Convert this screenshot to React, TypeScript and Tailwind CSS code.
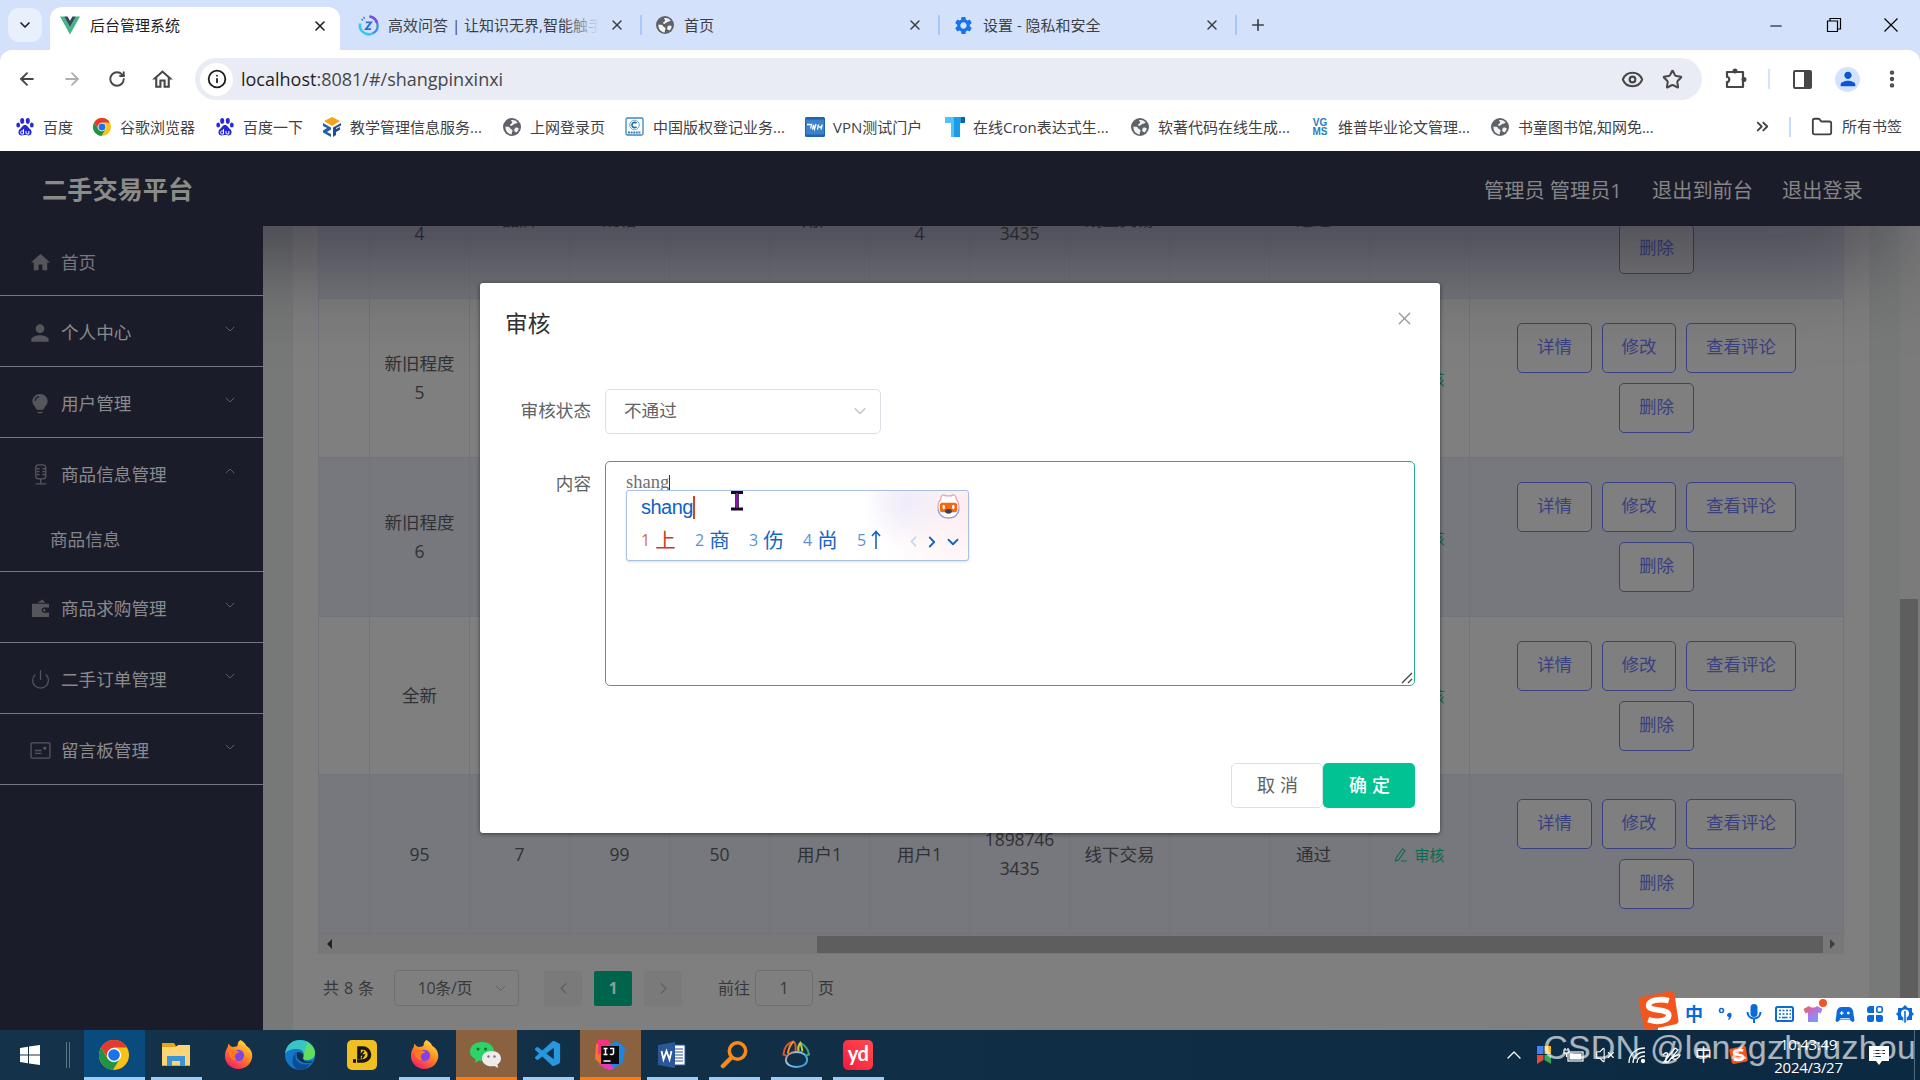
import React from 'react';
import {
  ArrowLeft, ArrowRight, RotateCw, Eye, Star, EllipsisVertical, X, Plus, ChevronDown,
  ChevronUp, ChevronLeft, ChevronRight, ChevronsRight, Folder, Info, Minus, Power, VolumeX,
} from 'lucide-react';
import { MdPerson, MdSettings, MdHome, MdOutlineHome } from 'react-icons/md';
import { VscVscode } from 'react-icons/vsc';

const ui = "font-['Open_Sans','Noto_Sans_CJK_SC',sans-serif]";

function VueLogo() {
  return (
    <svg viewBox="0 0 20 18" className="h-[19px] w-5 shrink-0">
      <path d="M0 0h4l6 10.400L16 0h4L10 18z" fill="#41b883" />
      <path d="M4 0h3.600L10 4.200 12.400 0H16l-6 10.400z" fill="#35495e" />
    </svg>
  );
}

function ZLogo() {
  return (
    <svg viewBox="0 0 20 20" className="size-[21px] shrink-0" fill="none">
      <path d="M11 1.500a8.500 8.500 0 0 1 3 16" stroke="#3d8fe8" strokeWidth="2.200" />
      <path d="M11 1.500a8.500 8.500 0 0 1 7 6" stroke="#7a4fd8" strokeWidth="2.400" />
      <path d="M2 8a8.500 8.500 0 0 0 12 9.500" stroke="#35c8ee" strokeWidth="2.400" />
      <path d="M3.500 5l3-3" stroke="#4a86e8" strokeWidth="2" strokeDasharray="1.500 1" />
      <path d="M7.500 7h5l-5 6.500h5" stroke="#2f6fe4" strokeWidth="1.800" />
    </svg>
  );
}

function Globe() {
  return (
    <svg viewBox="0 0 20 20" className="size-5 shrink-0">
      <circle cx="10" cy="10" r="9" fill="#5f6368" />
      <path d="M3.500 9.500c2.500.2 4 .2 4.500 1.500.5 1.500 2 1 2.500 2.200.3 1-.8 1.800-.8 4.300C5.500 17 3 13.500 3.500 9.500zM9 3.200c3-.7 5.500.6 6.800 2.800-1.500 0-2 .8-3.300.8-.8 1.200-2 .9-2.600 2-1 .4-2 0-1.700-1.200.4-1.200 1.700-.6 2-1.800.1-1-.9-1.400-1.200-2.600zM13 11c1.200-.6 2.600-.5 3.800.4-.4 1.700-1.200 3-2.400 4-1-.8-2-.4-2.200-2 0-1 .2-1.800.8-2.400z" fill="#f1f3f6" />
    </svg>
  );
}

function Baidu() {
  return (
    <svg viewBox="0 0 20 20" className="size-5 shrink-0" fill="#2529d8">
      <ellipse cx="7.200" cy="3.900" rx="2" ry="2.800" />
      <ellipse cx="12.800" cy="3.900" rx="2" ry="2.800" />
      <ellipse cx="3.200" cy="8" rx="1.900" ry="2.500" />
      <ellipse cx="16.800" cy="8" rx="1.900" ry="2.500" />
      <path d="M10 8c2.500 0 3 2.500 5 4 2.500 2 2 6.500-1.500 6.500-1.500 0-2-.4-3.500-.4s-2 .4-3.500.4C3 18.500 2.500 14 5 12c2-1.500 2.500-4 5-4z" />
      <path d="M8.500 12v5H6.800c-1.800 0-1.800-3 0-3h1.500M11 14v2c0 .8.3 1 1 1h1.800v-3" stroke="#fff" strokeWidth="1" fill="none" />
    </svg>
  );
}

function Chrome({ className }: { className: string }) {
  return (
    <svg viewBox="0 0 30 30" className={className}>
      <circle cx="15" cy="15" r="15" fill="#fbc116" />
      <path d="M2 7.500A15 15 0 0 0 14 30L21 18.500 8.500 18.500z" fill="#229342" />
      <path d="M2 7.500A15 15 0 0 1 28 7.500H15L9 18.500z" fill="#e33b2e" />
      <circle cx="15" cy="15" r="7.200" fill="#fff" />
      <circle cx="15" cy="15" r="5.800" fill="#1a73e8" />
    </svg>
  );
}

function JxLogo() {
  return (
    <svg viewBox="0 0 20 20" className="size-5 shrink-0">
      <path d="M10 0l8 4-8 5-8-5z" fill="#f6a21b" />
      <path d="M1 6l8 4.500v2L5 15l4 2v3l-8-4.500v-2L5 11 1 9z" fill="#2462a8" />
      <path d="M19 6l-8 4.500V20l3-2v-3l4-2.200V10l-4 2v-1l5-2.500z" fill="#1f4f90" />
    </svg>
  );
}

function CLogo() {
  return (
    <svg viewBox="0 0 20 20" className="size-5 shrink-0" fill="none">
      <rect x="1" y="1" width="17" height="17" rx="1.500" stroke="#3b86bd" strokeWidth="1.300" />
      <circle cx="9.500" cy="8" r="4.800" stroke="#6aa6d2" strokeWidth="1" />
      <path d="M11.500 6.300a2.600 2.600 0 1 0 0 3.400" stroke="#1d6dab" strokeWidth="1.600" />
      <path d="M3 15.500h13" stroke="#3b86bd" strokeWidth="2" strokeDasharray="2 .6" />
    </svg>
  );
}

function VpnLogo() {
  return (
    <svg viewBox="0 0 20 20" className="size-5 shrink-0">
      <rect width="20" height="20" rx="1.500" fill="#1e63b4" />
      <rect x="1" y="2.500" width="18" height="15" fill="#3c82cb" />
      <path d="M2 7.500h4.500l-.8 4M7.500 12.500l1-4.500 1 4 1.500-5M12.500 12.500l1-5M14 10h2.500M16 12.500l1.200-5" stroke="#fff" strokeWidth="1.300" fill="none" />
    </svg>
  );
}

function TLogo() {
  return (
    <svg viewBox="0 0 20 20" className="size-5 shrink-0">
      <path d="M0 0h20v6h-5v14H6V6H0z" fill="#1c9be6" />
      <path d="M0 0h9v20H6V6H0z" fill="#4fc3f7" />
      <path d="M16 0h4v6h-4z" fill="#0b63a8" />
    </svg>
  );
}

function Vgms() {
  return (
    <span className="flex w-5 shrink-0 flex-col items-center font-['Liberation_Sans',sans-serif] text-[10px] leading-[9px] font-bold text-[#2b7cc0]">
      <span>VG</span>
      <span>MS</span>
    </span>
  );
}

const tabs = [
  { icon: <ZLogo />, title: '高效问答 | 让知识无界,智能触手', width: 'w-[302px]', pad: 'pl-[18px]', fade: true },
  { icon: <Globe />, title: '首页', width: 'w-[298px]', pad: 'pl-[13px]', fade: false },
  { icon: <MdSettings className="size-[21px] shrink-0 text-[#1a73e8]" />, title: '设置 - 隐私和安全', width: 'w-[297px]', pad: 'pl-[13px]', fade: false },
];

function TabStrip() {
  return (
    <div className="flex h-[50px] bg-[#d3e1fb] text-[15px] text-[#3b3f45]">
      <div className="flex w-[50px] justify-center pt-2 pr-px">
        <div className="flex h-[34px] w-[34px] items-center justify-center rounded-[11px] bg-[#e8f0fe] text-[#1f1f1f]">
          <ChevronDown className="size-4" strokeWidth={2.500} />
        </div>
      </div>
      <div className="mt-[7px] flex h-[43px] w-[290px] items-center rounded-t-[12px] bg-white pr-3 pb-[6px] pl-[10px] text-[#1f1f1f]">
        <VueLogo />
        <span className="ml-[10px] flex-1">后台管理系统</span>
        <X className="size-4" strokeWidth={2.400} />
      </div>
      {tabs.map((t) => (
        <div key={t.title} className={`${t.width} ${t.pad} mt-2 flex h-[34px] items-center`}>
          {t.icon}
          <span className="relative ml-[9px] w-[211px] overflow-hidden whitespace-nowrap">
            {t.title}
            {t.fade && <span className="absolute inset-y-0 right-0 w-9 bg-gradient-to-r from-transparent to-[#d3e1fb]" />}
          </span>
          <X className="ml-auto size-4 shrink-0" strokeWidth={2.200} />
          <span className="ml-[15px] h-5 w-[2px] shrink-0 bg-[#a8c7fa]" />
        </div>
      ))}
      <Plus className="mt-[16px] ml-[12px] size-[18px]" strokeWidth={2.200} />
      <div className="mt-[17px] ml-auto flex text-black">
        <Minus className="mr-[41px] size-[18px]" strokeWidth={1.500} />
        <svg viewBox="0 0 16 16" className="mr-[41px] size-4" fill="none" stroke="currentColor" strokeWidth="1.200">
          <path d="M1.500 4h10v10.500h-10zM4 4V1.500h10.500V12h-3" />
        </svg>
        <svg viewBox="0 0 16 16" className="mr-[21px] size-4" fill="none" stroke="currentColor" strokeWidth="1.200">
          <path d="M1.500 1.500l13 13M14.500 1.500l-13 13" />
        </svg>
      </div>
    </div>
  );
}

function Toolbar() {
  return (
    <div className="bg-[#d3e1fb]">
      <div className="flex h-[56px] items-center rounded-t-[12px] bg-white pt-[2px] text-[#474747]">
        <ArrowLeft className="ml-[17px] size-5" strokeWidth={2.300} />
        <ArrowRight className="ml-[25px] size-5 text-[#b0b0b0]" strokeWidth={2.300} />
        <RotateCw className="ml-[26px] size-[18px]" strokeWidth={2.500} />
        <MdOutlineHome className="ml-[24px] size-[25px]" />
        <div className="ml-[20px] flex h-[42px] w-[1507px] items-center rounded-full bg-[#e9ebf5]">
          <div className="ml-[5px] flex h-[33px] w-[33px] items-center justify-center rounded-full bg-white text-[#1f1f1f]">
            <Info className="size-5" strokeWidth={2.200} />
          </div>
          <span className="ml-[8px] text-[18px] leading-6 text-[#45474b]">
            <span className="text-[#1f1f1f]">localhost</span>:8081/#/shangpinxinxi
          </span>
          <Eye className="ml-auto size-[23px]" strokeWidth={2.200} />
          <Star className="mr-[19px] ml-[18px] size-[21px]" strokeWidth={2.300} />
        </div>
        <svg viewBox="0 0 22 22" className="ml-[23px] size-[22px]" fill="none" stroke="currentColor" strokeWidth="2.200">
          <path d="M2 4h16v15H2v-5c3 0 3-5 0-5z" strokeLinejoin="round" />
          <circle cx="10" cy="3" r="1.400" fill="currentColor" />
          <circle cx="19" cy="11.500" r="1.400" fill="currentColor" />
        </svg>
        <span className="ml-[21px] h-5 w-[2px] bg-[#d3e3fd]" />
        <span className="ml-[23px] h-[19px] w-[19px] rounded-[2px] border-2 border-r-[8px] border-[#474747]" />
        <span className="ml-[23px] flex size-[25px] items-center justify-center rounded-full bg-[#d3e3fd]">
          <MdPerson className="size-[22px] text-[#0b57d0]" />
        </span>
        <EllipsisVertical className="ml-[21px] size-[22px]" strokeWidth={2.800} />
      </div>
    </div>
  );
}

const bookmarks = [
  { icon: <Baidu />, label: '百度', width: 'w-[77px]' },
  { icon: <Chrome className="mx-px size-[18px] shrink-0" />, label: '谷歌浏览器', width: 'w-[123px]' },
  { icon: <Baidu />, label: '百度一下', width: 'w-[107px]' },
  { icon: <JxLogo />, label: '教学管理信息服务...', width: 'w-[180px]' },
  { icon: <Globe />, label: '上网登录页', width: 'w-[123px]' },
  { icon: <CLogo />, label: '中国版权登记业务...', width: 'w-[180px]' },
  { icon: <VpnLogo />, label: 'VPN测试门户', width: 'w-[140px]' },
  { icon: <TLogo />, label: '在线Cron表达式生...', width: 'w-[185px]' },
  { icon: <Globe />, label: '软著代码在线生成...', width: 'w-[180px]' },
  { icon: <Vgms />, label: '维普毕业论文管理...', width: 'w-[180px]' },
  { icon: <Globe />, label: '书童图书馆,知网免...', width: 'w-[180px]' },
];

function BookmarkBar() {
  return (
    <div className="flex h-[45px] items-center bg-white pb-[4px] pl-[15px] text-[15px] whitespace-nowrap text-[#3f4145]">
      {bookmarks.map((b) => (
        <div key={b.label} className={`${b.width} flex shrink-0 items-center gap-2`}>
          {b.icon}
          <span className="leading-5">{b.label}</span>
        </div>
      ))}
      <ChevronsRight className="ml-[83px] size-[19px] shrink-0" strokeWidth={2.300} />
      <span className="ml-[17px] h-5 w-[2px] shrink-0 bg-[#c9dcfb]" />
      <Folder className="ml-[20px] size-[22px] shrink-0" strokeWidth={2} />
      <span className="ml-[9px]">所有书签</span>
    </div>
  );
}

const bulb = (
  <svg viewBox="0 0 20 22" className="size-[21px]">
    <path d="M9.500 1C4.800 1 1.500 4.500 1.500 8.500c0 4.500 3.500 6 4.500 9h7c1-3 4.500-4.500 4.500-9C17.500 4.500 14.200 1 9.500 1z" fill="currentColor" />
    <path d="M4.500 8.500c0-2.500 1.500-4.200 4-4.700" stroke="#1b1c2a" strokeWidth="1.300" fill="none" />
    <path d="M7 20.500h5" stroke="currentColor" strokeWidth="1.500" />
  </svg>
);
const mic = (
  <svg viewBox="0 0 20 22" className="size-[21px]" fill="none" stroke="currentColor" strokeWidth="1.400">
    <rect x="5" y="1" width="10.500" height="14.500" rx="3" />
    <path d="M6 5h3M6 8h3M6 11h3M12 5h3M12 8h3M12 11h3M10.200 15.500V20.500M5 20.800h11" />
  </svg>
);
const wallet = (
  <svg viewBox="0 0 20 20" className="size-[19px]" fill="currentColor">
    <path d="M7 4l5-3.500 3 3.500zM1 5h18v4h-5.500a2.800 2.800 0 0 0 0 5.500H19V19H1z" />
    <circle cx="14" cy="11.800" r="1.300" />
  </svg>
);
const card = (
  <svg viewBox="0 0 22 18" className="h-[17px] w-[21px]" fill="none" stroke="currentColor" strokeWidth="1.400">
    <rect x="1" y="1" width="20" height="16" rx="1" />
    <path d="M5 9h7M5 12h7" />
    <circle cx="15.500" cy="6.500" r="1" fill="currentColor" />
  </svg>
);

const menu = [
  { icon: <MdHome className="size-[23px]" />, label: '首页', arrow: '', first: true },
  { icon: <MdPerson className="size-[26px]" />, label: '个人中心', arrow: 'down', first: false },
  { icon: bulb, label: '用户管理', arrow: 'down', first: false },
  { icon: mic, label: '商品信息管理', arrow: 'up', child: '商品信息', first: false },
  { icon: wallet, label: '商品求购管理', arrow: 'down', first: false },
  { icon: <Power className="size-[21px]" strokeWidth={1.400} />, label: '二手订单管理', arrow: 'down', first: false },
  { icon: card, label: '留言板管理', arrow: 'down', first: false },
];

function Sidebar() {
  return (
    <div className="h-full w-[263px] shrink-0 bg-[#1b1c2a] text-[17.600px] text-[#8a8a8c]">
      {menu.map((m) => (
        <div key={m.label} className="border-b border-[#75767e]">
          <div className={`${m.first ? 'h-[69px]' : 'h-[70px]'} flex items-center pt-[3px] pr-[25px] pl-[27px]`}>
            <span className="mr-[8px] flex w-[26px] justify-center text-[#55565c]">{m.icon}</span>
            <span className={m.first ? 'text-[#77777c]' : 'text-[#8a8a8c]'}>{m.label}</span>
            {m.arrow === 'down' && <ChevronDown className="mb-[7px] ml-auto size-[16px] text-[#5c5d64]" strokeWidth={1.500} />}
            {m.arrow === 'up' && <ChevronUp className="mb-[7px] ml-auto size-[16px] text-[#5c5d64]" strokeWidth={1.500} />}
          </div>
          {m.child && <div className="flex h-[63px] items-center pl-[50px] text-[#858589]">{m.child}</div>}
        </div>
      ))}
    </div>
  );
}

function PageHeader() {
  return (
    <div className="flex h-[75px] items-center bg-[#1b1c2a] pt-[3px] pl-[42px] text-[20.200px] text-[#858585]">
      <span className="text-[25.200px] font-bold text-[#8b8b88]">二手交易平台</span>
      <span className="ml-auto w-[168px]">管理员 管理员1</span>
      <span className="w-[130px]">退出到前台</span>
      <span className="w-[138px]">退出登录</span>
    </div>
  );
}

const rows: { height: string; striped: boolean; cells: string[][]; audit: boolean }[] = [
  { height: 'h-[159px]', striped: true, audit: false, cells: [['新旧程度', '4'], ['品牌'], ['规格'], [], ['用户'], ['用户', '4'], ['1898746', '3435'], ['线上交易'], [], ['通过']] },
  { height: 'h-[159px]', striped: false, audit: true, cells: [['新旧程度', '5'], [], [], [], [], [], [], [], [], []] },
  { height: 'h-[159px]', striped: true, audit: true, cells: [['新旧程度', '6'], [], [], [], [], [], [], [], [], []] },
  { height: 'h-[158px]', striped: false, audit: true, cells: [['全新'], [], [], [], [], [], [], [], [], []] },
  { height: 'h-[159px]', striped: true, audit: true, cells: [['95'], ['7'], ['99'], ['50'], ['用户1'], ['用户1'], ['1898746', '3435'], ['线下交易'], [], ['通过']] },
];

const btn = 'flex h-[50px] items-center justify-center rounded-[5px] border border-[#3a4180] bg-[#7f7f7f] pb-[3px]';

function Table() {
  return (
    <div className="-mt-[86px] w-[1526px] border-l border-[#72747c] text-[17.500px] text-[#303134]">
      {rows.map((r, i) => (
        <div
          key={i}
          className={`${r.height} ${r.striped ? 'bg-[#77787d]' : 'bg-[#7f7f7f]'} grid grid-cols-[51px_repeat(11,100px)_374px] border-b border-[#72747c]`}
        >
          <div className="border-r border-[#72747c]" />
          {r.cells.map((c, j) => (
            <div
              key={j}
              className={`flex flex-col items-center justify-center border-r border-[#72747c] leading-[29px] ${j === 9 ? 'pr-3' : ''} ${j === 6 ? 'tracking-[-0.100px]' : ''}`}
            >
              {c.map((line) => (
                <span key={line}>{line}</span>
              ))}
            </div>
          ))}
          <div className="flex items-center justify-center gap-[6px] border-r border-[#72747c] pt-[2px] text-[15px] text-[#0c6a50]">
            {r.audit && (
              <>
                <svg viewBox="0 0 14 14" className="size-[14px]" fill="none" stroke="currentColor" strokeWidth="1.100">
                  <path d="M2 10L8.500 1l2.500 1.800L4.500 12l-3 1zM7 13h6" />
                </svg>
                <span>审核</span>
              </>
            )}
          </div>
          <div className="flex flex-col items-center gap-[10px] border-r border-[#72747c] pt-[24px] text-[#3a4180]">
            <div className="flex gap-[10px]">
              <span className={`${btn} w-[75px]`}>详情</span>
              <span className={`${btn} w-[74px]`}>修改</span>
              <span className={`${btn} w-[110px]`}>查看评论</span>
            </div>
            <span className={`${btn} w-[75px]`}>删除</span>
          </div>
        </div>
      ))}
      <div className="flex h-[20px] items-center bg-[#787878]">
        <span className="ml-[8px] border-y-[5px] border-r-[5px] border-y-transparent border-r-[#222]" />
        <span className="ml-[485px] h-[17px] w-[1006px] bg-[#5e5e5e]" />
        <span className="ml-[7px] border-y-[5px] border-l-[5px] border-y-transparent border-l-[#3e3e3e]" />
      </div>
    </div>
  );
}

function Pagination() {
  return (
    <div className="mt-[16px] flex h-[36px] items-center text-[16px] text-[#37383b]">
      <span className="ml-[5px] w-[71px] tracking-[0.400px]">共 8 条</span>
      <span className="flex h-[36px] w-[125px] items-center justify-center rounded-[4px] border border-[#6e6f71]">
        <span className="ml-[14px] tracking-[-0.300px]">10条/页</span>
        <ChevronDown className="ml-[20px] size-[17px] text-[#606164]" strokeWidth={1.400} />
      </span>
      <span className="ml-[25px] flex h-[35px] w-[38px] items-center justify-center rounded-[2px] bg-[#7a7a7b] text-[#606164]">
        <ChevronLeft className="size-[19px]" strokeWidth={1.800} />
      </span>
      <span className="ml-[12px] flex h-[35px] w-[38px] items-center justify-center rounded-[2px] bg-[#00634b] font-bold text-[#8d9b96]">1</span>
      <span className="ml-[12px] flex h-[35px] w-[38px] items-center justify-center rounded-[2px] bg-[#7a7a7b] text-[#606164]">
        <ChevronRight className="size-[19px]" strokeWidth={1.800} />
      </span>
      <span className="ml-[36px]">前往</span>
      <span className="ml-[5px] flex h-[36px] w-[58px] items-center justify-center rounded-[4px] border border-[#6e6f71]">1</span>
      <span className="ml-[5px]">页</span>
    </div>
  );
}

const candidates = [
  ['1', '上'], ['2', '商'], ['3', '伤'], ['4', '尚'],
];

function ImePopup() {
  return (
    <div className="absolute top-[28px] left-[20px] h-[71px] w-[343px] rounded-[3px] border border-[#a9bfe4] bg-white bg-[radial-gradient(circle_at_82%_15%,rgba(236,232,250,0.800)_0,transparent_16%),radial-gradient(circle_at_100%_20%,#fdecef_0,#fff_28%)] shadow-sm">
      <div className="flex h-[32px] items-center pl-[14px] font-['Liberation_Sans',sans-serif] text-[20px] text-[#0a63c9]">
        <span className="tracking-[-0.500px]">shang</span>
        <span className="h-[23px] w-[1.500px] bg-[#d0442c]" />
        <svg viewBox="0 0 26 28" className="mr-[7px] mb-px ml-auto h-[27px] w-[25px]">
          <path d="M5 6C5 2 8 1 10 3h6c2-2 5-1 5 3 5 6 4 20-8 20S0 12 5 6z" fill="#fff" stroke="#e99aa8" strokeWidth="1.200" />
          <path d="M2 17c1 6 5 9 11 9s10-3 11-9" stroke="#7fa3ee" strokeWidth="1.200" fill="none" />
          <rect x="4" y="10" width="18" height="10" rx="3" fill="#f4690e" />
          <ellipse cx="8" cy="14.500" rx="1.300" ry="2.400" fill="#fff" />
          <ellipse cx="18" cy="14.500" rx="1.300" ry="2.400" fill="#fff" />
          <ellipse cx="13" cy="19" rx="3.500" ry="2.500" fill="#3e3f5c" />
        </svg>
      </div>
      <div className="flex h-[33px] items-center pl-[14px] text-[20.500px] text-[#1565c0]">
        {candidates.map(([n, c], i) => (
          <span key={n} className={`flex w-[54px] items-center gap-[5px] leading-[30px] ${i === 0 ? 'text-[#d03a1c]' : ''}`}>
            <span className={`text-[16px] ${i === 0 ? 'text-[#e0674f]' : 'text-[#5b93d2]'}`}>{n}</span>
            <span>{c}</span>
          </span>
        ))}
        <span className="flex w-[48px] items-center gap-[5px]">
          <span className="text-[16px] text-[#5b93d2]">5</span>
          <svg viewBox="0 0 10 20" className="h-5 w-[10px]" fill="none" stroke="currentColor" strokeWidth="1.600">
            <path d="M5 19V2M1 6l4-4.500L9 6" />
          </svg>
        </span>
        <ChevronLeft className="mt-1 size-[17px] text-[#bcd2ec]" strokeWidth={2} />
        <ChevronRight className="mt-1 ml-px size-[18px]" strokeWidth={2.400} />
        <ChevronDown className="mt-1 ml-[3px] size-[18px]" strokeWidth={2.400} />
      </div>
    </div>
  );
}

function Dialog() {
  return (
    <div className="absolute top-[283px] left-[480px] flex h-[550px] w-[960px] flex-col rounded-[3px] bg-white text-[17.600px] text-[#606266] shadow-[0_1px_4px_rgba(0,0,0,0.5)]">
      <div className="flex h-[82px] items-center justify-between pr-[25px] pl-[25px] text-[22.700px] text-[#303133]">
        <span>审核</span>
        <X className="mb-[11px] size-[21px] text-[#909399]" strokeWidth={1.400} />
      </div>
      <div className="mt-[24px] flex h-[45px] items-center">
        <span className="w-[111px] pb-[2px] text-right">审核状态</span>
        <span className="ml-[14px] flex h-[45px] w-[276px] items-center justify-between rounded-[5px] border border-[#dcdfe6] pr-[10px] pb-[2px] pl-[18px]">
          不通过
          <ChevronDown className="size-[20px] text-[#c0c4cc]" strokeWidth={1.600} />
        </span>
      </div>
      <div className="mt-[27px] flex">
        <span className="h-[45px] w-[111px] text-right leading-[44px]">内容</span>
        <div className="relative ml-[14px] h-[225px] w-[810px] rounded-[5px] border border-[#2aab95]">
          <div className="flex h-[42px] items-center pl-[20px] font-['Liberation_Serif',serif] text-[18.500px] text-[#6d6f73]">
            shang
            <span className="h-[17px] w-px bg-[#333]" />
          </div>
          <svg viewBox="0 0 12 12" className="absolute right-[1px] bottom-[1px] size-[12px]" stroke="#444" strokeWidth="1.300">
            <path d="M1 11L11 1M7 11l4-4" />
          </svg>
          <ImePopup />
          <svg viewBox="0 0 12 20" className="absolute top-[29px] left-[125px] h-5 w-3">
            <path d="M0 1.500h12M0 18h12" stroke="#1b0526" strokeWidth="3" />
            <path d="M6 1v17" stroke="#1b0526" strokeWidth="3.600" />
            <path d="M6 2v15" stroke="#9a17c4" strokeWidth="1.800" />
          </svg>
        </div>
      </div>
      <div className="mt-[77px] flex justify-end pr-[25px] text-[18px] tracking-[5px]">
        <span className="flex h-[45px] w-[92px] items-center justify-center rounded-[5px] border border-[#dcdfe6] pb-px pl-[6px]">取消</span>
        <span className="flex h-[45px] w-[92px] items-center justify-center rounded-[5px] bg-[#00c292] pb-px pl-[6px] font-medium text-white">确定</span>
      </div>
    </div>
  );
}

function SogouS({ className }: { className: string }) {
  return (
    <svg viewBox="0 0 40 38" className={className}>
      <path d="M3 6L32 0c2 0 3 1 3.500 3l4 26c0 2-1 3-3 3.500L10 38c-2 0-3.500-1-4-3L.500 9.500C.500 7.500 1 6.500 3 6z" fill="#f4551c" />
      <path d="M30 9.500C21 7 10 9 10.500 14.500 11 20 30 17 30 23.500 30 29.500 18 31 10 28" fill="none" stroke="#fff" strokeWidth="5.500" />
    </svg>
  );
}

function ImeBar() {
  return (
    <div className="absolute top-[991px] left-[1638px] flex h-[39px] w-[282px] items-end">
      <div className="absolute right-0 bottom-0 h-[32px] w-[262px] bg-white" />
      <SogouS className="relative h-[39px] w-[41px]" />
      <div className="relative flex h-[32px] flex-1 items-center text-[#0a6ad8]">
        <span className="ml-[6px] w-[18px] text-[18px] font-bold">中</span>
        <svg viewBox="0 0 14 14" className="ml-[15px] size-[14px]">
          <circle cx="3.500" cy="3.500" r="2" fill="none" stroke="currentColor" strokeWidth="1.500" />
          <path d="M10 6.500a2 2 0 0 1 3.600 1.200c0 2-.8 4-3 5.300l-.7-.8c.8-.6 1.200-1.200 1.300-2A2 2 0 0 1 10 6.500z" fill="currentColor" />
        </svg>
        <svg viewBox="0 0 16 20" className="ml-[14px] h-5 w-4">
          <rect x="4.500" y="0" width="7" height="13" rx="3.500" fill="currentColor" />
          <path d="M1.500 8c0 8.500 13 8.500 13 0M8 14v5" stroke="currentColor" strokeWidth="2" fill="none" />
        </svg>
        <svg viewBox="0 0 19 16" className="ml-[13px] h-4 w-[19px]" fill="none" stroke="currentColor" strokeWidth="1.500">
          <rect x="1" y="1" width="17" height="14" rx="1.500" strokeWidth="2" />
          <path d="M4 4.500h2M7.500 4.500h2M11 4.500h2M14.500 4.500h1.500M4 8h2M7.500 8h2M11 8h2M14.500 8h1.500M4 11.500h1.500M7 11.500h5.500M14.500 11.500h1.500" />
        </svg>
        <span className="relative ml-[9px]">
          <svg viewBox="0 0 20 18" className="h-[18px] w-5">
            <defs>
              <linearGradient id="shirt" x1="0" y1="0" x2="0.700" y2="1">
                <stop offset="0" stopColor="#f4603c" />
                <stop offset="0.500" stopColor="#b474e6" />
                <stop offset="1" stopColor="#6aa2fa" />
              </linearGradient>
            </defs>
            <path d="M6 1c1.500 2 6.500 2 8 0l5.500 3-2 4.500-2.500-1V17H5V7.500l-2.500 1L.500 4z" fill="url(#shirt)" />
          </svg>
          <span className="absolute -top-[6px] -right-[4px] size-2 rounded-full bg-[#f4512c]" />
        </span>
        <svg viewBox="0 0 20 18" className="ml-[12px] h-[17px] w-5">
          <path d="M6 1h8c3 0 5 3 5 8l1 6c-1 3-3 2-4.500-.5h-11C3 17 1 18 0 15l1-6c0-5 2-8 5-8z" fill="currentColor" />
          <path d="M4.500 7.500h4M6.500 5.500v4M5 13.500h10" stroke="#fff" strokeWidth="1.300" />
          <circle cx="13.500" cy="7.500" r="1.500" fill="#fff" />
        </svg>
        <svg viewBox="0 0 16 16" className="ml-[12px] size-4" fill="currentColor">
          <path d="M3.500 0H7v7H2a2 2 0 0 1-2-2V3.500A3.500 3.500 0 0 1 3.500 0z" />
          <path d="M2 9h5v5a2 2 0 0 1-2 2H2a2 2 0 0 1-2-2v-3a2 2 0 0 1 2-2zM9 9h5a2 2 0 0 1 2 2v3a2 2 0 0 1-2 2h-3a2 2 0 0 1-2-2z" />
          <rect x="9.800" y=".8" width="5.400" height="5.400" rx="1.500" fill="none" stroke="currentColor" strokeWidth="1.600" />
        </svg>
        <svg viewBox="0 0 18 18" className="ml-[13px] size-[18px]">
          <path d="M9 0l3 3h4v4l2 2-2 2v4h-4l-3 3-3-3H2v-4L0 9l2-2V3h4z" fill="currentColor" />
          <circle cx="9" cy="8.500" r="4" fill="#fff" />
          <path d="M9 17V8" stroke="#fff" strokeWidth="3.500" />
          <path d="M9 17V6" stroke="currentColor" strokeWidth="1.600" />
        </svg>
      </div>
    </div>
  );
}

function Firefox({ id }: { id: string }) {
  return (
    <svg viewBox="0 0 30 30" className="size-[29px]">
      <defs>
        <linearGradient id={id} x1="0.800" y1="0" x2="0.200" y2="1">
          <stop offset="0" stopColor="#ffe14a" />
          <stop offset="0.450" stopColor="#ff8a1e" />
          <stop offset="1" stopColor="#f5156c" />
        </linearGradient>
      </defs>
      <path d="M17 0c4 2 5 4 6 6 5 3 7 8 6 13-1.500 6.500-7 11-14 11C7 30 1 24 1 16.500 1 12 2.500 9 4 7c0-1 0-2 1-3 1 2 2 3 4 3.200C12 7 13 7 14 6c0-3 1-5 3-6z" fill={`url(#${id})`} />
      <circle cx="15" cy="16" r="5.800" fill="#8143e6" />
      <path d="M5 12c4-4 7-1 11 0-1 2-3 1.500-4 3-1.500 2-1 4 1 6-5 0-8-4-8-9z" fill="#ff7b22" />
    </svg>
  );
}

const appIcons: { icon: React.ReactNode; state: string }[] = [
  { icon: <Chrome className="size-[30px]" />, state: 'active' },
  {
    state: 'open',
    icon: (
      <svg viewBox="0 0 28 24" className="h-6 w-7">
        <path d="M0 0h12l2 3h14v20H0z" fill="#e5a419" />
        <path d="M0 4h14l2-2h12v20H0z" fill="#fdd576" />
        <path d="M5 13h18v10h-5v-5h-8v5H5z" fill="#3b93d8" />
      </svg>
    ),
  },
  { icon: <Firefox id="foxA" />, state: '' },
  {
    state: '',
    icon: (
      <svg viewBox="0 0 30 30" className="size-[30px]">
        <circle cx="15" cy="15" r="15" fill="#1476c6" />
        <path d="M0 14C1 5 7 0 15 0c9 0 15 6 15 13 0 5-4 7-8 7-3 0-4-1-4-2 2-3 1-9-6-9C6 9 1 11 0 14z" fill="#38c5c4" />
        <path d="M22 3c5 2 8 6 8 10 0 5-4 7-8 7-3 0-4-1-4-2 1-2 1-3 1-4z" fill="#62dd5c" />
        <path d="M11 12c-3 9 4 14 14 12-3 4-6 6-10 6C7 29 5 19 11 12z" fill="#0c4c93" />
        <path d="M12 12c-2 6 3 12 13 11 1 0 2-1 3-2-6 2-10 0-10-3 1-3 0-6-6-6z" fill="#11304a" />
      </svg>
    ),
  },
  {
    state: '',
    icon: (
      <svg viewBox="0 0 30 30" className="size-[30px]">
        <rect width="30" height="30" rx="5" fill="#f0c022" />
        <path d="M12 19V8h4a6.200 6.200 0 0 1 0 13h-6" stroke="#161616" strokeWidth="3.600" fill="none" />
        <rect x="6" y="19.200" width="3" height="3.600" fill="#161616" />
        <path d="M17 11l-3.500 4h3.500l-2 3.500" stroke="#161616" strokeWidth="1.700" fill="none" />
      </svg>
    ),
  },
  { icon: <Firefox id="foxB" />, state: 'open' },
  {
    state: 'alert',
    icon: (
      <svg viewBox="0 0 32 26" className="h-[26px] w-8">
        <path d="M12 0c7 0 12 4 12 9.500S19 19 12 19c-1 0-2 0-3-.4L5 21l.6-3.800C2 15.500 0 13 0 9.500 0 4 5 0 12 0z" fill="#2bd467" />
        <path d="M21.500 9C27 9 31 12 31 16.500c0 2.500-1.500 4.500-3.500 6L28 26l-3.500-2c-1 .2-2 .3-3 .3-5.500 0-9.500-3.300-9.500-7.800S16 9 21.500 9z" fill="#ececec" />
        <circle cx="8" cy="7" r="1.500" fill="#166b35" />
        <circle cx="15.500" cy="7" r="1.500" fill="#166b35" />
        <circle cx="18.500" cy="14.500" r="1.200" fill="#777" />
        <circle cx="24.500" cy="14.500" r="1.200" fill="#777" />
      </svg>
    ),
  },
  { icon: <VscVscode className="size-[31px] text-[#2797e0]" />, state: 'open' },
  {
    state: 'alert',
    icon: (
      <svg viewBox="0 0 30 30" className="size-[30px]">
        <path d="M1 4l9-3 6 8-5 20-11-10z" fill="#f5762b" />
        <path d="M3 0h10l4 6-14 9z" fill="#f9317e" />
        <path d="M14 5l8-4 8 7-2 14-11 8-6-4z" fill="#1b86e8" />
        <path d="M3 24l10-4 6 9-5 1z" fill="#e83ac0" />
        <rect x="6" y="6" width="18" height="18" fill="#0b0b0b" />
        <path d="M8.500 8.500h4M10.500 8.500v6M8.500 14.500h4M15 8.500h3.500v4.500c0 1.500-2.500 2-3.500 1M8.500 21h7" stroke="#fff" strokeWidth="1.500" fill="none" />
      </svg>
    ),
  },
  {
    state: 'open',
    icon: (
      <svg viewBox="0 0 28 26" className="h-[26px] w-7">
        <path d="M15 3h12v20H15z" fill="#fff" stroke="#2b579a" strokeWidth="1" />
        <path d="M17 7h8M17 10h8M17 13h8M17 16h8M17 19h8" stroke="#2b579a" strokeWidth="1.200" />
        <path d="M0 3l17-3v26L0 23z" fill="#2b579a" />
        <path d="M3.500 9l2 8.500L8.500 9l3 8.500 2-8.500" stroke="#fff" strokeWidth="1.800" fill="none" />
      </svg>
    ),
  },
  {
    state: 'open',
    icon: (
      <svg viewBox="0 0 28 28" className="size-7" fill="none" stroke="#f98a18" strokeLinecap="round">
        <circle cx="17.500" cy="10" r="8.200" strokeWidth="3.500" />
        <path d="M11 17l-8 8" strokeWidth="4.500" />
      </svg>
    ),
  },
  {
    state: 'open',
    icon: (
      <svg viewBox="0 0 30 30" className="size-[29px]" fill="none" strokeWidth="2">
        <defs>
          <linearGradient id="paw" x1="0" y1="0" x2="1" y2="0.600">
            <stop offset="0" stopColor="#e2603c" />
            <stop offset="0.400" stopColor="#8fc9ea" />
            <stop offset="1" stopColor="#3fa0e0" />
          </linearGradient>
        </defs>
        <path d="M15 12.500c6.500 0 11 3.500 11 8S21.500 28 15 28 4 25 4 20.500s4.500-8 11-8z" stroke="url(#paw)" />
        <path d="M4 16L1.500 15C2 8 6 3 12 1.500c2 1.500 2.500 4 2 10" stroke="#e0562f" />
        <path d="M6 14C7 8 9 4 12 1.500" stroke="#ef9a22" />
        <path d="M17 11.500c-.5-4 0-6.500 2-8.500 4 2 8 6 9 12l-4 1.500" stroke="#3fa66c" />
        <path d="M17 11.500c-.5-4 0-6.500 2-8.500 1 3 2 6 2 9" stroke="#c5c93a" />
      </svg>
    ),
  },
  {
    state: 'open',
    icon: (
      <span className="flex size-[30px] items-center justify-center rounded-[5px] bg-gradient-to-bl from-[#ff4a50] to-[#f4123c] pb-1 font-['Lato',sans-serif] text-[20px] leading-none font-bold tracking-[-0.500px] text-white">
        yd
      </span>
    ),
  },
];

function Taskbar() {
  return (
    <div className="relative flex h-[50px] bg-gradient-to-r from-[#143249] to-[#0b2a42]">
      <div className="flex w-[84px] items-center pl-5">
        <svg viewBox="0 0 20 20" className="size-5" fill="#fff">
          <path d="M0 3l8-1.200v7.700H0zM9 1.600L20 0v9.500H9zM0 10.500h8v7.700L0 17zM9 10.500h11V20L9 18.400z" />
        </svg>
        <span className="ml-[26px] h-[26px] w-[4px] border-x border-[#5d7484]" />
      </div>
      {appIcons.map((a, i) => (
        <div
          key={i}
          className={`mr-px flex w-[61px] shrink-0 flex-col items-center ${a.state === 'active' ? 'bg-[#0a4b7e]' : a.state === 'alert' ? 'bg-[#8b623f]' : ''}`}
        >
          <div className="flex h-[47px] items-center pt-[2px] pr-px">{a.icon}</div>
          <div
            className={`h-[3px] ${a.state === 'active' ? 'w-full bg-[#9dccf4]' : a.state === 'alert' ? 'w-full bg-[#ff7a0a]' : a.state === 'open' ? 'w-[51px] bg-[#9dccf4]' : ''}`}
          />
        </div>
      ))}
      <div className="ml-auto flex items-center text-white">
        <ChevronUp className="size-[24px]" strokeWidth={1.300} />
        <svg viewBox="0 0 14 18" className="ml-[11px] h-[18px] w-[14px]">
          <path d="M0 0h6.500v8H0z" fill="#3e84f5" />
          <path d="M7.500 0H14v8H7.500z" fill="#f4b81e" />
          <path d="M0 9h6.500v5L0 18z" fill="#ea4a3c" />
          <path d="M7.500 9H14v9l-6.500-4z" fill="#37a853" />
        </svg>
        <svg viewBox="0 0 22 16" className="ml-[12px] h-4 w-[22px]" fill="none" stroke="#fff" strokeWidth="1.200">
          <rect x="5" y="5" width="15" height="9" />
          <rect x="7" y="7" width="11" height="5" fill="#fff" />
          <path d="M1 3h5v3H1zM2 1v2M5 1v2M3.500 6v4" />
        </svg>
        <VolumeX className="ml-[10px] size-[20px]" strokeWidth={1.300} />
        <svg viewBox="0 0 18 18" className="ml-[13px] size-[18px]" fill="none" stroke="#fff" strokeWidth="1.300">
          <path d="M1 17C1 8 8 2 17 2M5 17c0-6 5-11 12-11M9 17c0-4 3-7 8-7" />
          <circle cx="15" cy="15" r="1.500" fill="#fff" />
        </svg>
        <svg viewBox="0 0 20 20" className="ml-[15px] size-5" fill="none" stroke="#fff" strokeWidth="1.300">
          <path d="M3 17L14 3l3 2L7 17zM2 10c3-4 6-2 4 1s-2 6 1 6M12 14c3 1 6-1 7-4-4-1-6 1-8 4" />
        </svg>
        <span className="ml-[14px] text-[17px] leading-6">中</span>
        <SogouS className="ml-[17px] h-[18px] w-[19px]" />
        <div className="ml-[22px] flex w-[77px] flex-col items-center pt-px text-[15px] leading-[23px] tracking-[-0.300px]">
          <span>10:43:49</span>
          <span>2024/3/27</span>
        </div>
        <svg viewBox="0 0 20 20" className="ml-[22px] size-5">
          <path d="M0 1h20v15h-7l-3 4-3-4H0z" fill="#fff" />
          <path d="M4 5.500h12M4 8.500h12M4 11.500h8" stroke="#12304a" strokeWidth="1.200" />
        </svg>
        <span className="mr-[5px] ml-[25px] h-[50px] w-px bg-[#51697c]" />
      </div>
      <span className="absolute top-[-5px] right-[4px] font-['Liberation_Sans',sans-serif] text-[34px] leading-[44px] tracking-[0.200px] whitespace-nowrap text-white/65">
        CSDN @lenzgzhouzhou
      </span>
    </div>
  );
}

export default function App() {
  return (
    <div className={`${ui} relative flex h-[1080px] w-[1920px] flex-col overflow-hidden bg-white`}>
      <TabStrip />
      <Toolbar />
      <BookmarkBar />
      <PageHeader />
      <div className="flex h-[804px] shrink-0">
        <Sidebar />
        <main className="relative flex flex-1 overflow-hidden bg-[#777978]">
          <div className="ml-[30px] h-full w-[1576px] bg-[#7f7f7f] pl-[25px]">
            <Table />
            <Pagination />
          </div>
          <div className="ml-auto h-full w-[20px] bg-[#7b7b7b] pt-[373px] pr-[2px]">
            <div className="h-full bg-[#5e5e5e]" />
          </div>
          <div className="absolute -top-[76px] right-[30px] -left-[150px] h-[76px] shadow-[0_20px_100px_rgba(24,24,40,0.75)]" />
        </main>
      </div>
      <Taskbar />
      <Dialog />
      <ImeBar />
    </div>
  );
}
